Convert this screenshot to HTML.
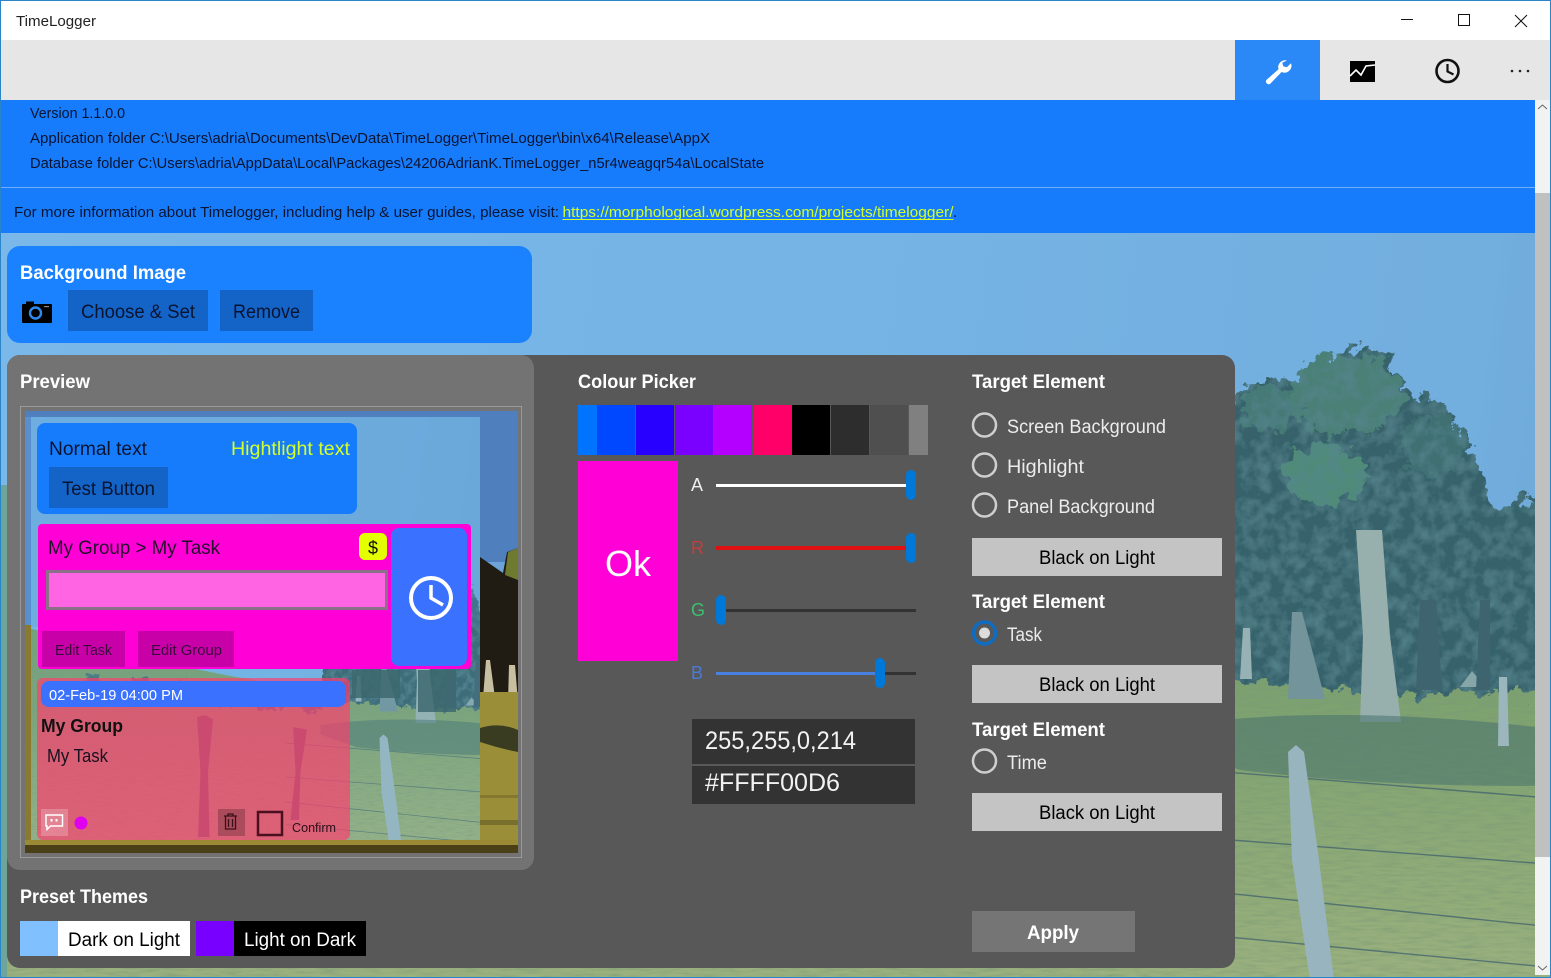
<!DOCTYPE html>
<html><head><meta charset="utf-8"><title>TimeLogger</title>
<style>html,body{margin:0;padding:0;background:#fff;overflow:hidden}svg{display:block}
text{font-family:"Liberation Sans",sans-serif;white-space:pre}
.d{fill:#0a1430;font-size:15px}.h{fill:#fff;font-weight:bold;font-size:19px}.o{fill:#ececec;font-size:19px}.k{fill:#000;font-size:19px}</style></head>
<body>
<svg width="1551" height="978" viewBox="0 0 1551 978" xmlns="http://www.w3.org/2000/svg">
<defs>
<linearGradient id="sky" gradientUnits="userSpaceOnUse" x1="0" y1="100" x2="1600" y2="300"><stop offset="0" stop-color="#7bb5ed"/><stop offset=".6" stop-color="#74aee4"/><stop offset=".93" stop-color="#6fa6da"/><stop offset="1" stop-color="#6a9fd2"/></linearGradient>
<linearGradient id="gr" gradientUnits="userSpaceOnUse" x1="0" y1="500" x2="0" y2="990"><stop offset="0" stop-color="#6f8a30"/><stop offset=".4" stop-color="#7f9330"/><stop offset="1" stop-color="#b0ac48"/></linearGradient>
<filter id="leaf" x="0" y="300" width="1600" height="480" filterUnits="userSpaceOnUse"><feTurbulence type="fractalNoise" baseFrequency=".08" numOctaves="4" seed="4" result="t"/><feDisplacementMap in="SourceGraphic" in2="t" scale="30" xChannelSelector="R" yChannelSelector="G" result="d"/><feTurbulence type="fractalNoise" baseFrequency=".07" numOctaves="3" seed="9" result="n"/><feColorMatrix in="n" type="matrix" values="0 0 0 0 .06 0 0 0 0 .14 0 0 0 0 .12 1.6 0 0 0 -.6" result="m"/><feComposite in="m" in2="d" operator="in" result="c"/><feMerge><feMergeNode in="d"/><feMergeNode in="c"/></feMerge></filter>
<filter id="tex" x="0" y="450" width="1600" height="540" filterUnits="userSpaceOnUse"><feTurbulence type="fractalNoise" baseFrequency=".05 .35" numOctaves="3" seed="7" result="n"/><feColorMatrix in="n" type="matrix" values="0 0 0 0 .2 0 0 0 0 .24 0 0 0 0 .05 1.3 0 0 0 -.5" result="m"/><feComposite in="m" in2="SourceAlpha" operator="in" result="c"/><feMerge><feMergeNode in="SourceGraphic"/><feMergeNode in="c"/></feMerge></filter>
<g id="scene">
<rect x="0" y="100" width="1600" height="890" fill="url(#sky)"/>
<g filter="url(#tex)"><path d="M0 485 L579 530 L800 590 L1000 630 L1235 668 L1600 690 L1600 990 L0 990 Z" fill="url(#gr)"/></g>
<g fill="#1e3a36" filter="url(#leaf)">
<path d="M700 625h30v45h-30zM790 632h40v40h-40zM880 640h25v40h-25zM960 645h30v45h-30zM1040 645h50v50h-50zM1130 650h40v50h-40z" opacity=".85"/>
<path d="M1170 680 L1190 450 L1235 395 L1261 378 L1292 380 L1337 365 L1347 345 L1385 355 L1412 395 L1442 403 L1472 450 L1495 512 L1533 496 L1600 470 L1600 690 L1400 695 L1235 680 Z" fill="#183029"/>
<ellipse cx="1345" cy="395" rx="58" ry="40" fill="#30603a"/><ellipse cx="1268" cy="408" rx="26" ry="24" fill="#2c563a"/><ellipse cx="1435" cy="445" rx="30" ry="30" fill="#224636"/><ellipse cx="1325" cy="475" rx="42" ry="30" fill="#3a7040"/><ellipse cx="1590" cy="385" rx="25" ry="35" fill="#7a8a3a"/>
</g>
<path d="M1356 530 L1382 530 L1390 636 L1401 722 L1360 722 L1363 636 Z" fill="#a8aa90"/>
<path d="M1292 612 L1302 612 L1325 699 L1288 699 Z" fill="#6f7f72"/><path d="M1243 628 L1250 628 L1252 679 L1240 679 Z" fill="#a8ac9a"/><path d="M1460 687 L1472 671 L1486 687Z" fill="#8f9a88"/><path d="M1420 600h16l6 90h-26z" fill="#203531"/><path d="M1480 600h10v90h-14z" fill="#203531"/>
<path d="M1170 726 Q1350 700 1600 735 L1600 785 Q1400 790 1240 770 L1170 745 Z" fill="#2e4a2e" opacity=".55"/>
<path d="M1499 677h8l2 69h-11z" fill="#b0b2a8"/>
<g stroke="#2a3830" stroke-width="1.4" fill="none" opacity=".8"><path d="M1100 762 L1600 802"/><path d="M1100 830 L1600 868"/><path d="M1100 880 L1600 932"/><path d="M1100 925 L1600 972"/></g>
<path d="M1288 752 L1296 745 L1304 752 L1318 852 L1334 980 L1310 980 L1292 860 Z" fill="#aab0aa"/>
<path d="M923 710 L940 706 L955 715 L945 820 L948 950 L925 950 L930 820 Z" fill="#4a3020"/><path d="M1115 730 L1143 735 L1130 820 L1127 916 L1110 916 L1120 820 Z" fill="#4a3020"/>
</g>
</defs>

<!-- window background scene -->
<use href="#scene"/>
<rect x="0" y="100" width="1551" height="878" fill="rgb(120,190,230)" fill-opacity=".35"/>
<rect x="1" y="485" width="6" height="492" fill="#6ea49a"/>

<!-- panels -->
<rect x="7" y="355" width="1228" height="613" rx="13" fill="#585858"/>
<rect x="7" y="355" width="527" height="515" rx="13" fill="#737373"/>
<rect x="7" y="246" width="525" height="97" rx="13" fill="#1a82ff"/>

<!-- title bar -->
<rect x="0" y="0" width="1551" height="40" fill="#fff"/>
<text x="16" y="26" font-size="15" textLength="80" lengthAdjust="spacingAndGlyphs" fill="#222">TimeLogger</text>
<rect x="1401" y="19" width="12" height="1" fill="#111"/>
<rect x="1458.5" y="14.5" width="11" height="11" fill="none" stroke="#111"/>
<path d="M1515 15 L1527 27 M1527 15 L1515 27" stroke="#111" fill="none"/>

<!-- toolbar -->
<rect x="0" y="40" width="1551" height="60" fill="#e6e6e6"/>
<rect x="1235" y="40" width="85" height="60" fill="#2b88f7"/>
<path d="M1287 60.5 a7 7 0 0 0 -8.5 8.7 L1266.6 79.8 a2.7 2.7 0 0 0 3.8 3.8 L1281.6 72 a7 7 0 0 0 9.4 -8.8 l-4.2 4 l-3.6 -.9 l-.9 -3.6 z" fill="#fff"/>
<rect x="1350" y="61" width="25" height="21" fill="#000"/>
<polyline points="1350,76 1356,70 1361,75 1366,66 1375,65" fill="none" stroke="#fff" stroke-width="1.6"/>
<circle cx="1447.5" cy="71" r="11" fill="none" stroke="#111" stroke-width="2.6"/>
<path d="M1447.5 64 V71.5 L1453.5 74.5" fill="none" stroke="#111" stroke-width="2.2"/>
<g fill="#222"><circle cx="1512" cy="71" r="1.3"/><circle cx="1520" cy="71" r="1.3"/><circle cx="1528" cy="71" r="1.3"/></g>

<!-- scrollbar -->
<rect x="1535" y="100" width="15" height="875" fill="#f2f2f2"/>
<rect x="1535" y="193" width="15" height="664" fill="#c0c0c0"/>
<polyline points="1538,109 1542.5,105 1547,109" fill="none" stroke="#666"/>
<polyline points="1538,966 1542.5,970 1547,966" fill="none" stroke="#666"/>

<!-- info panel -->
<rect x="1" y="100" width="1534" height="133" fill="#177cfb"/>
<rect x="1" y="187" width="1534" height="1" fill="#70aff8"/>
<text class="d" x="30" y="118" textLength="95" lengthAdjust="spacingAndGlyphs">Version 1.1.0.0</text>
<text class="d" x="30" y="143" textLength="680" lengthAdjust="spacingAndGlyphs">Application folder C:\Users\adria\Documents\DevData\TimeLogger\TimeLogger\bin\x64\Release\AppX</text>
<text class="d" x="30" y="168" textLength="734" lengthAdjust="spacingAndGlyphs">Database folder C:\Users\adria\AppData\Local\Packages\24206AdrianK.TimeLogger_n5r4weagqr54a\LocalState</text>
<text class="d" x="14" y="217" textLength="545" lengthAdjust="spacingAndGlyphs">For more information about Timelogger, including help &amp; user guides, please visit:</text>
<text x="562.5" y="217" font-size="15" fill="#d2ff2a" textLength="391" lengthAdjust="spacingAndGlyphs">https://morphological.wordpress.com/projects/timelogger/</text>
<rect x="562.5" y="219" width="391" height="1" fill="#d2ff2a"/>
<text class="d" x="953" y="217">.</text>

<!-- background image panel -->
<text class="h" x="20" y="279" textLength="166" lengthAdjust="spacingAndGlyphs">Background Image</text>
<path d="M23 304 h3 v-2.500 h8 v2.500 h17 a1 1 0 0 1 1 1 v17 a1 1 0 0 1 -1 1 h-28 a1 1 0 0 1 -1 -1 v-17 a1 1 0 0 1 1 -1z" fill="#000"/>
<circle cx="35.500" cy="313" r="5.500" fill="none" stroke="#2f8af0" stroke-width="2.400"/><rect x="44" y="306" width="5" height="1.200" fill="#889"/>
<rect x="68" y="290" width="140" height="41" fill="#1464c8"/>
<rect x="220" y="290" width="93" height="41" fill="#1464c8"/>
<text class="k" style="fill:#0a1430" x="81" y="318" textLength="114" lengthAdjust="spacingAndGlyphs">Choose &amp; Set</text>
<text class="k" style="fill:#0a1430" x="233" y="318" textLength="67" lengthAdjust="spacingAndGlyphs">Remove</text>

<!-- preview -->
<text class="h" x="20" y="388" textLength="70" lengthAdjust="spacingAndGlyphs">Preview</text>
<rect x="20.500" y="406.500" width="501" height="451" fill="none" stroke="#9a9a9a"/>
<svg x="25" y="411" width="493" height="442" viewBox="579 98 986 884"><use href="#scene"/></svg>
<rect x="31" y="417" width="449" height="210" fill="#3a6cb0" fill-opacity=".22"/>
<!-- preview uncovered edge strips -->
<rect x="25" y="411" width="493" height="6" fill="#4f80bd"/>
<rect x="25" y="417" width="6" height="208" fill="#5a8fcf"/>
<rect x="480" y="417" width="38" height="145" fill="#4f80bd"/>
<path d="M480 557 L503 573 L507 552 L518 548 L518 692 L480 692Z" fill="#201c14"/>
<path d="M505 575 L508 552 L518 548 L518 580Z" fill="#6d7a30"/>
<path d="M486 660h4l5 38h-12zM509 665h6l3 37h-10z" fill="#c8bea0"/>
<rect x="480" y="692" width="38" height="153" fill="#9a8e38"/>
<path d="M480 728 Q500 722 518 730 L518 752 Q498 748 480 742Z" fill="#3a3c22"/>
<rect x="480" y="795" width="38" height="3" fill="#7a6e2e" opacity=".7"/><rect x="480" y="820" width="38" height="5" fill="#6a6228" opacity=".7"/>
<rect x="25" y="625" width="6" height="220" fill="#8a7a30"/>
<rect x="31" y="417" width="449" height="423" fill="rgb(120,190,230)" fill-opacity=".42"/>
<path d="M352 670h48v28h-48zM418 670h38v42h-38z" fill="#3d6870" fill-opacity=".85"/>
<rect x="25" y="840" width="493" height="5" fill="#9a8a34"/>
<rect x="25" y="845" width="493" height="8" fill="#4a4018"/>
<rect x="37" y="423" width="320" height="91" rx="8" fill="#177cfb"/>
<text class="k" style="fill:#0a1430" x="49" y="455" textLength="98" lengthAdjust="spacingAndGlyphs">Normal text</text>
<text x="231" y="455" font-size="19" fill="#d2ff2a" textLength="119" lengthAdjust="spacingAndGlyphs">Hightlight text</text>
<rect x="49" y="467" width="119" height="41" fill="#1464c8"/>
<text class="k" style="fill:#0a1430" x="62" y="495" textLength="93" lengthAdjust="spacingAndGlyphs">Test Button</text>

<rect x="38" y="524" width="433" height="145" rx="4" fill="#ff00d6"/>
<text class="k" style="fill:#20102c" x="48" y="554" textLength="172" lengthAdjust="spacingAndGlyphs">My Group &gt; My Task</text>
<rect x="359" y="533" width="28" height="27" rx="6" fill="#e4ff00"/>
<text x="373" y="554" font-size="18" text-anchor="middle" fill="#111">$</text>
<rect x="47.500" y="571.500" width="339" height="37" fill="#ff64e2" stroke="#8a7088" stroke-width="3"/>
<rect x="42" y="631" width="83" height="36" fill="#c800a8"/>
<rect x="138" y="631" width="96" height="36" fill="#c800a8"/>
<text x="55" y="655" font-size="15" fill="#3a0a3a" textLength="57" lengthAdjust="spacingAndGlyphs">Edit Task</text>
<text x="151" y="655" font-size="15" fill="#3a0a3a" textLength="71" lengthAdjust="spacingAndGlyphs">Edit Group</text>
<rect x="391" y="528" width="76" height="138" rx="8" fill="#3a72ff"/>
<circle cx="431" cy="598" r="20" fill="none" stroke="#fff" stroke-width="4"/>
<path d="M431 585 V598 L443 605" fill="none" stroke="#fff" stroke-width="3.500"/>

<rect x="37" y="678" width="313" height="162" rx="6" fill="rgb(255,60,110)" fill-opacity=".68"/>
<rect x="41" y="681" width="305" height="26" rx="8" fill="#3a72ff"/>
<text x="49" y="700" font-size="15" fill="#fff" textLength="134" lengthAdjust="spacingAndGlyphs">02-Feb-19 04:00 PM</text>
<text x="41" y="732" font-size="18" font-weight="bold" fill="#111" textLength="82" lengthAdjust="spacingAndGlyphs">My Group</text>
<text x="47" y="762" font-size="18" fill="#1a1020" textLength="61" lengthAdjust="spacingAndGlyphs">My Task</text>
<rect x="41" y="809" width="27" height="27" fill="#fff" fill-opacity=".22"/>
<path d="M46 815 h16.500 v11 h-12 l-3.500 3.500 v-3.500 h-1 z" fill="none" stroke="#fff" stroke-width="1.500"/>
<rect x="50.500" y="819" width="2" height="2.500" fill="#fff"/><rect x="55.500" y="819" width="2" height="2.500" fill="#fff"/>
<circle cx="81" cy="823" r="6.500" fill="#e000f0"/>
<rect x="218" y="809" width="27" height="27" fill="#000" fill-opacity=".22"/>
<path d="M224 816 h13 M228 816 v-2 h5 v2 M225.500 816 v13 h10 v-13 M228.500 819 v8 M232.500 819 v8" fill="none" stroke="#3a1018" stroke-width="1.300"/>
<rect x="258" y="812" width="24" height="23" fill="none" stroke="#4a1020" stroke-width="2.500"/>
<text x="292" y="832" font-size="13" fill="#2a1018" textLength="44" lengthAdjust="spacingAndGlyphs">Confirm</text>

<!-- preset themes -->
<text class="h" x="20" y="903" textLength="128" lengthAdjust="spacingAndGlyphs">Preset Themes</text>
<rect x="20" y="921" width="38" height="35" fill="#80c0ff"/><rect x="58" y="921" width="132" height="35" fill="#fff"/>
<text class="k" x="68" y="946" textLength="112" lengthAdjust="spacingAndGlyphs">Dark on Light</text>
<rect x="196" y="921" width="38" height="35" fill="#7800ff"/><rect x="234" y="921" width="132" height="35" fill="#000"/>
<text class="k" style="fill:#fff" x="244" y="946" textLength="112" lengthAdjust="spacingAndGlyphs">Light on Dark</text>

<!-- colour picker -->
<text class="h" x="578" y="388" textLength="118" lengthAdjust="spacingAndGlyphs">Colour Picker</text>
<rect x="578" y="405" width="19" height="50" fill="#0073ff"/><rect x="597" y="405" width="38" height="50" fill="#0048ff"/><rect x="636" y="405" width="38" height="50" fill="#2800ff"/><rect x="675" y="405" width="38" height="50" fill="#7a00ff"/><rect x="714" y="405" width="38" height="50" fill="#b400ff"/><rect x="753" y="405" width="38" height="50" fill="#ff0068"/><rect x="792" y="405" width="38" height="50" fill="#000"/><rect x="831" y="405" width="38" height="50" fill="#2d2d2d"/><rect x="870" y="405" width="38" height="50" fill="#4f4f4f"/><rect x="909" y="405" width="19" height="50" fill="#808080"/>
<rect x="578" y="461" width="100" height="200" fill="#ff00d6"/>
<text x="628" y="576" font-size="36" fill="#fff" text-anchor="middle" textLength="46" lengthAdjust="spacingAndGlyphs">Ok</text>
<text x="691" y="491" font-size="18" fill="#eee">A</text>
<text x="691" y="554" font-size="18" fill="#c83c3c">R</text>
<text x="691" y="616" font-size="18" fill="#3cc070">G</text>
<text x="691" y="679" font-size="18" fill="#4a7ad8">B</text>
<rect x="716" y="484" width="192" height="3" fill="#fff"/><rect x="906" y="470" width="10" height="30" rx="5" fill="#0078d7"/>
<rect x="716" y="546" width="192" height="4" fill="#e01010"/><rect x="906" y="533" width="10" height="30" rx="5" fill="#0078d7"/>
<rect x="720" y="609" width="196" height="3" fill="#333"/><rect x="716" y="595" width="10" height="30" rx="5" fill="#0078d7"/>
<rect x="716" y="672" width="200" height="3" fill="#333"/><rect x="716" y="672" width="162" height="3" fill="#4a80e0"/><rect x="875" y="658" width="10" height="30" rx="5" fill="#0078d7"/>
<rect x="692" y="719" width="223" height="45" fill="#333"/><rect x="692" y="766" width="223" height="38" fill="#333"/>
<text x="705" y="749" font-size="25" fill="#f2f2f2" textLength="151" lengthAdjust="spacingAndGlyphs">255,255,0,214</text>
<text x="705" y="791" font-size="25" fill="#f2f2f2" textLength="135" lengthAdjust="spacingAndGlyphs">#FFFF00D6</text>

<!-- target elements -->
<text class="h" x="972" y="388" textLength="133" lengthAdjust="spacingAndGlyphs">Target Element</text>
<g fill="none" stroke="#cfcfcf" stroke-width="2.500"><circle cx="984.500" cy="425" r="11.500"/><circle cx="984.500" cy="465" r="11.500"/><circle cx="984.500" cy="505" r="11.500"/><circle cx="984.500" cy="761" r="11.500"/></g>
<text class="o" x="1007" y="433" textLength="159" lengthAdjust="spacingAndGlyphs">Screen Background</text>
<text class="o" x="1007" y="473" textLength="77" lengthAdjust="spacingAndGlyphs">Highlight</text>
<text class="o" x="1007" y="513" textLength="148" lengthAdjust="spacingAndGlyphs">Panel Background</text>
<rect x="972" y="538" width="250" height="38" fill="#c4c4c4"/>
<text class="k" x="1039" y="564" textLength="116" lengthAdjust="spacingAndGlyphs">Black on Light</text>
<text class="h" x="972" y="608" textLength="133" lengthAdjust="spacingAndGlyphs">Target Element</text>
<circle cx="984.500" cy="633" r="11" fill="#585858" stroke="#0f6cc0" stroke-width="3.500"/><circle cx="984.500" cy="633" r="5.500" fill="#dcdcdc"/>
<text class="o" x="1007" y="641" textLength="35" lengthAdjust="spacingAndGlyphs">Task</text>
<rect x="972" y="665" width="250" height="38" fill="#c4c4c4"/>
<text class="k" x="1039" y="691" textLength="116" lengthAdjust="spacingAndGlyphs">Black on Light</text>
<text class="h" x="972" y="736" textLength="133" lengthAdjust="spacingAndGlyphs">Target Element</text>
<text class="o" x="1007" y="769" textLength="40" lengthAdjust="spacingAndGlyphs">Time</text>
<rect x="972" y="793" width="250" height="38" fill="#c4c4c4"/>
<text class="k" x="1039" y="819" textLength="116" lengthAdjust="spacingAndGlyphs">Black on Light</text>
<rect x="972" y="911" width="163" height="41" fill="#757575"/>
<text class="h" x="1027" y="939" textLength="52" lengthAdjust="spacingAndGlyphs">Apply</text>

<!-- window border -->
<rect x="0.500" y="0.500" width="1550" height="977" fill="none" stroke="#2a84c8"/>
</svg>
</body></html>
